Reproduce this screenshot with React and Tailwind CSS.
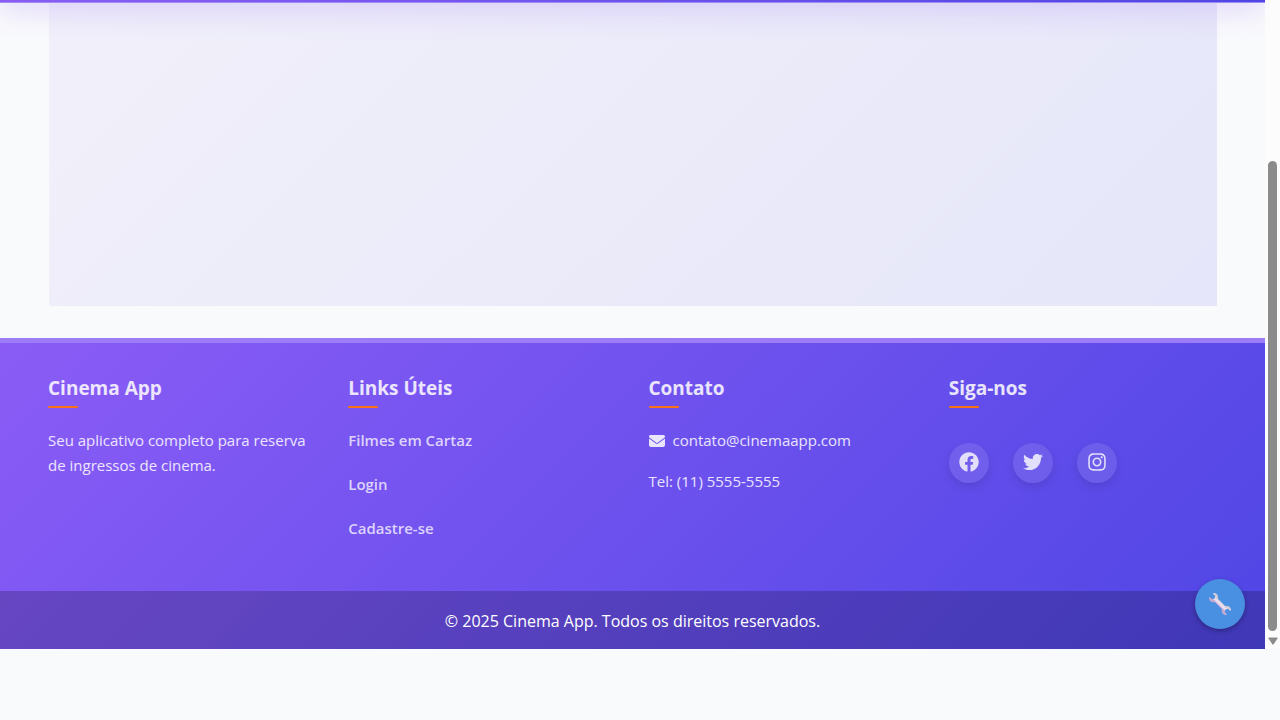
import { FaFacebook, FaTwitter, FaInstagram } from "react-icons/fa";
import { FaEnvelope } from "react-icons/fa6";

const links = ["Filmes em Cartaz", "Login", "Cadastre-se"];

const socials = [
  { name: "Facebook", Icon: FaFacebook },
  { name: "Twitter", Icon: FaTwitter },
  { name: "Instagram", Icon: FaInstagram },
];

function Column({ title, children }) {
  return (
    <section className="flex flex-col">
      <h2 className="text-[19px] leading-7 font-bold text-white/85">{title}</h2>
      <span className="mt-1 h-0.5 w-[30px] rounded-xs bg-[#f97316]" />
      <div className="mt-5">{children}</div>
    </section>
  );
}

function ScrollTrack() {
  return (
    <div className="flex w-[15px] shrink-0 flex-col items-center bg-[#fcfcfc]" aria-hidden="true">
      <div className="mt-[161px] w-[9px] flex-1 rounded-full bg-[#8b8b8b]" />
      <svg className="mt-1.5 mb-1 h-2 w-2.5" viewBox="0 0 10 8">
        <path d="M1 0.5H9Q10 0.5 9.5 1.5L5.7 7.3Q5 8 4.3 7.3L0.5 1.5Q0 0.5 1 0.5Z" fill="#8b8b8b" />
      </svg>
    </div>
  );
}

function Wrench() {
  return (
    <svg className="size-6" viewBox="0 0 24 24" aria-hidden="true">
      <defs>
        <linearGradient id="steel" gradientUnits="userSpaceOnUse" x1="9.5" y1="14.5" x2="14.5" y2="9.5">
          <stop offset="0.2" stopColor="#c3a9d2" />
          <stop offset="0.5" stopColor="#f0e4f6" />
          <stop offset="0.8" stopColor="#d3cbd8" />
        </linearGradient>
      </defs>
      <path
        d="M5.500 1C8.200.8 10.300 2.800 10.100 5.500L10 6.800 17.200 14 18.500 13.900C21.200 13.700 23.300 15.600 23 18.300L22.200 19 20.200 17 18 17.300 17 18.200 16.900 20.200 18.900 22.200 18.300 23C15.600 23.200 13.500 21.200 13.800 18.500L13.900 17.200 6.800 10.100 5.500 10.200C2.800 10.400.800 8.300 1 5.700L1.800 5 3.900 7 6 6.700 6.900 5.900 7 3.900 5 1.800Z"
        fill="url(#steel)"
      />
    </svg>
  );
}

export default function App() {
  return (
    <div className="min-h-screen bg-[#f9fafc] font-['Open_Sans','Noto_Sans',sans-serif]">
      <div className="flex">
        <div className="relative min-w-0 flex-1 overflow-hidden">
          <header className="absolute inset-x-0 -top-[77px] h-20 border-b border-[#9d8df2] bg-linear-to-r from-[#8b5cf6] to-[#4f46e5] shadow-[0_8px_30px_rgba(139,92,246,0.2)]" />
          <main className="px-12 pb-8">
            <div className="ml-px h-[306px] bg-[linear-gradient(135deg,#f1f0fa,#e5e6f9)]" />
          </main>
          <footer className="border-t-[5px] border-[#9d7df7] bg-[linear-gradient(135deg,#8b5cf6,#4f46e5)] bg-origin-border">
            <div className="grid grid-cols-4 gap-8 px-12 pt-[31px] pb-[51px] text-[15px] leading-[25px] text-white/85">
              <Column title="Cinema App">
                <p>Seu aplicativo completo para reserva de ingressos de cinema.</p>
              </Column>
              <Column title="Links Úteis">
                <ul className="flex flex-col gap-5 leading-6 font-semibold text-white/75">
                  {links.map((label) => (
                    <li key={label}>
                      <a href="#">{label}</a>
                    </li>
                  ))}
                </ul>
              </Column>
              <Column title="Contato">
                <p className="flex items-center gap-2">
                  <FaEnvelope className="size-4" />
                  contato@cinemaapp.com
                </p>
                <p className="mt-4">Tel: (11) 5555-5555</p>
              </Column>
              <Column title="Siga-nos">
                <div className="mt-[15px] flex gap-6">
                  {socials.map(({ name, Icon }) => (
                    <a
                      key={name}
                      href="#"
                      aria-label={name}
                      className="flex size-10 items-center justify-center rounded-full bg-white/10 pb-0.5 text-white/80 shadow-[0_4px_8px_rgba(0,0,0,0.1)]"
                    >
                      <Icon className="size-5" />
                    </a>
                  ))}
                </div>
              </Column>
            </div>
            <div className="bg-black/20 pt-[18px] pb-4 text-center text-base leading-6 text-white">
              © 2025 Cinema App. Todos os direitos reservados.
            </div>
          </footer>
        </div>
        <ScrollTrack />
      </div>
      <button
        type="button"
        aria-label="Ferramentas"
        className="fixed right-[35px] bottom-[91px] flex size-[50px] items-center justify-center rounded-full bg-[#4a90e2] shadow-[0_2px_5px_rgba(0,0,0,0.3)]"
      >
        <Wrench />
      </button>
    </div>
  );
}
